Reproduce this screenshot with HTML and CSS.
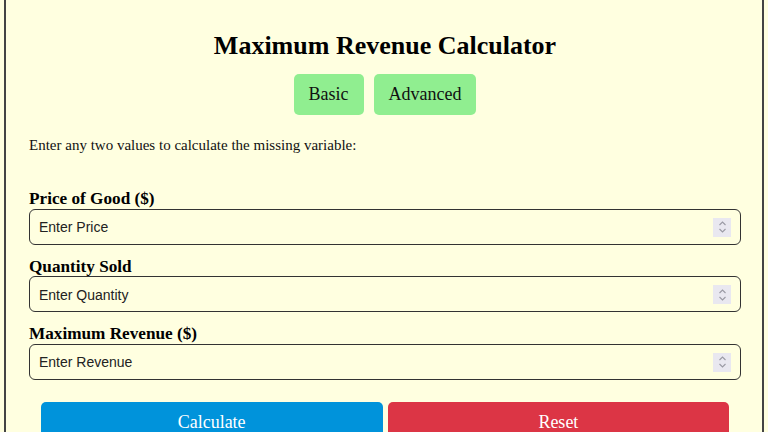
FILE: index.html
```html
<!DOCTYPE html>
<html lang="en">
<head>
<meta charset="utf-8">
<title>Maximum Revenue Calculator</title>
<link rel="stylesheet" href="styles.css">
</head>
<body>
<div class="calc">
  <h1 class="title">Maximum Revenue Calculator</h1>
  <div class="modes">
    <button class="mode">Basic</button>
    <button class="mode">Advanced</button>
  </div>
  <p class="intro">Enter any two values to calculate the missing variable:</p>
  <form class="form">
    <div class="field">
      <label class="label" for="price">Price of Good ($)</label>
      <div class="input-wrap">
        <input class="input" id="price" type="text" placeholder="Enter Price">
        <span class="spin"><svg width="9" height="14" viewBox="0 0 9 14"><path d="M1.5 5 L4.5 2 L7.5 5 M1.5 9 L4.5 12 L7.5 9" fill="none" stroke="#9a9aa4" stroke-width="1.1"/></svg></span>
      </div>
    </div>
    <div class="field">
      <label class="label" for="qty">Quantity Sold</label>
      <div class="input-wrap">
        <input class="input" id="qty" type="text" placeholder="Enter Quantity">
        <span class="spin"><svg width="9" height="14" viewBox="0 0 9 14"><path d="M1.5 5 L4.5 2 L7.5 5 M1.5 9 L4.5 12 L7.5 9" fill="none" stroke="#9a9aa4" stroke-width="1.1"/></svg></span>
      </div>
    </div>
    <div class="field">
      <label class="label" for="rev">Maximum Revenue ($)</label>
      <div class="input-wrap">
        <input class="input" id="rev" type="text" placeholder="Enter Revenue">
        <span class="spin"><svg width="9" height="14" viewBox="0 0 9 14"><path d="M1.5 5 L4.5 2 L7.5 5 M1.5 9 L4.5 12 L7.5 9" fill="none" stroke="#9a9aa4" stroke-width="1.1"/></svg></span>
      </div>
    </div>
    <div class="actions">
      <button type="button" class="btn btn-calc">Calculate</button>
      <button type="reset" class="btn btn-reset">Reset</button>
    </div>
  </form>
</div>
</body>
</html>
```
FILE: styles.css
```css
html, body {
  margin: 0;
  padding: 0;
  background: #ffffe0;
}
body {
  font-family: "Liberation Serif", "Times New Roman", serif;
  color: #111;
}
.calc {
  width: 712px;
  margin: 0 auto;
  padding: 1px 21px 40px 23px;
  border-left: 2px solid #444;
  border-right: 2px solid #444;
  background: #ffffe0;
}
.title {
  font-size: 26px;
  font-weight: bold;
  text-align: center;
  margin: 30px 0 13px;
  line-height: 30px;
  color: #000;
}
.modes {
  display: flex;
  justify-content: center;
  gap: 10px;
}
.mode {
  font-family: "Liberation Serif", "Times New Roman", serif;
  font-size: 18px;
  line-height: 21px;
  padding: 10px 15px;
  background: #90ee90;
  border: none;
  border-radius: 5px;
  color: #111;
}
.intro {
  font-size: 15px;
  line-height: 17px;
  margin: 22px 0 0;
}
.form {
  margin-top: 33px;
}
.field {
  margin-bottom: 10px;
}
.label {
  display: block;
  font-size: 17.2px;
  font-weight: bold;
  line-height: 19.5px;
  padding-top: 2px;
  color: #000;
}
.input-wrap {
  position: relative;
}
.input {
  display: block;
  box-sizing: border-box;
  width: 100%;
  height: 36px;
  padding: 1px 9px 0;
  border: 1px solid #333;
  border-radius: 6px;
  background: transparent;
  font-family: "Liberation Sans", Arial, sans-serif;
  font-size: 14px;
  color: #111;
}
.input::placeholder {
  color: #222;
}
.spin {
  position: absolute;
  right: 10px;
  top: 9px;
  width: 18px;
  height: 19px;
  background: #e9e8f0;
  display: flex;
  align-items: center;
  justify-content: center;
}
.actions {
  display: flex;
  justify-content: center;
  gap: 5px;
  margin-top: 22px;
}
.btn {
  width: 48%;
  font-family: "Liberation Serif", "Times New Roman", serif;
  font-size: 18px;
  line-height: 21px;
  padding: 10px 0;
  border: none;
  border-radius: 5px;
  color: #fff;
}
.btn-calc {
  background: #0093db;
}
.btn-reset {
  background: #dc3545;
}
```
